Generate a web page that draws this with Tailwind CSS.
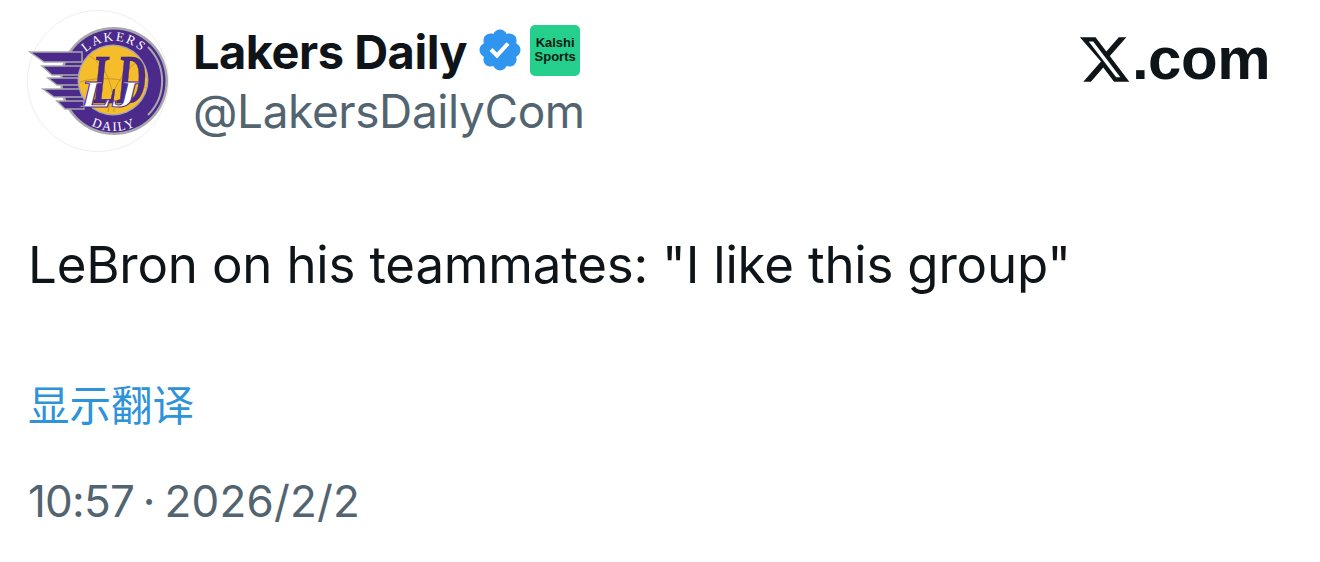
<!DOCTYPE html>
<html lang="en">
<head>
  <meta charset="UTF-8" />
  <title>Lakers Daily</title>
  <script src="https://cdn.jsdelivr.net/npm/@tailwindcss/browser@4"></script>
</head>
<body class="bg-white w-[1320px] h-[562px] overflow-hidden font-['Inter',sans-serif]">
  <main class="pl-[27px] pt-[10px]">
    <header class="flex items-start">
      <!-- avatar -->
      <svg class="w-[142px] h-[142px] shrink-0" viewBox="27 10 142 142">
        <circle cx="98" cy="81" r="70.5" fill="#fff" stroke="#eeeeee" />
        <circle cx="114" cy="81" r="54" fill="#a9a8ad" />
        <circle cx="114" cy="81" r="51.5" fill="#4b2a8c" />
        <path d="M148 47a48 48 0 0 1 0 68" fill="none" stroke="#a9a8ad" stroke-width="2" />
        <g fill="#4b2a8c" stroke="#a9a8ad" stroke-width="1.5">
          <polygon points="30,52 82,52 82,62 44,62" />
          <polygon points="42,66 82,66 82,75 52,75" />
          <polygon points="48,78 82,78 82,85 57,85" />
          <polygon points="43,89 82,89 82,97 54,97" />
          <polygon points="57,101 84,101 84,109 65,109" />
        </g>
        <circle cx="113" cy="80" r="35.5" fill="#a9a8ad" />
        <circle cx="113" cy="80" r="34" fill="#f6bd2b" />
        <g fill="none" stroke="#c9962a" stroke-width="1">
          <path d="M90 56c16 10 24 30 24 56" />
          <path d="M140 60c-14 8-28 26-32 52" />
          <path d="M80 82c20-6 46-4 66 6" />
        </g>
        <defs>
          <path id="topArc" d="M75 72a40 40 0 0 1 78 0" />
          <path id="botArc" d="M74 111a50 50 0 0 0 80 0" />
        </defs>
        <text font-family="Liberation Serif, serif" font-size="13" fill="#fff" letter-spacing="2"><textPath href="#topArc" startOffset="50%" text-anchor="middle">LAKERS</textPath></text>
        <text font-family="Liberation Serif, serif" font-size="13" fill="#fff" letter-spacing="1.5"><textPath href="#botArc" startOffset="50%" text-anchor="middle">DAILY</textPath></text>
        <text x="92" y="103" textLength="54" lengthAdjust="spacingAndGlyphs" font-family="Liberation Serif, serif" font-style="italic" font-weight="700" font-size="70" fill="#4b2a8c" stroke="#3a1f70" stroke-width="0.5">LD</text>
        <text x="80" y="107" textLength="58" lengthAdjust="spacingAndGlyphs" font-family="Liberation Serif, serif" font-style="italic" font-weight="700" font-size="38" fill="#fff" stroke="#4b2a8c" stroke-width="0.8">LJ</text>
      </svg>

      <div class="ml-[24px] pt-[13px]">
        <div class="flex items-center h-[56px]">
          <span class="text-[47px] leading-none font-bold tracking-[-0.5px] text-[#0f1419]">Lakers Daily</span>
          <svg class="w-[48px] h-[48px] ml-[9px] mb-[2px]" viewBox="0 0 24 24">
            <circle cx="12" cy="12" r="7" fill="#fff" />
            <path fill="#2f95ee" d="M22.25 12c0-1.43-.88-2.67-2.19-3.34.46-1.39.2-2.9-.81-3.91s-2.52-1.27-3.91-.81c-.66-1.31-1.91-2.19-3.34-2.19s-2.67.88-3.33 2.19c-1.4-.46-2.91-.2-3.92.81s-1.26 2.52-.8 3.91c-1.31.67-2.2 1.91-2.2 3.34s.89 2.67 2.2 3.34c-.46 1.39-.21 2.9.8 3.91s2.52 1.26 3.91.81c.67 1.31 1.91 2.19 3.34 2.19s2.68-.88 3.34-2.19c1.39.45 2.9.2 3.91-.81s1.27-2.52.81-3.91c1.31-.67 2.19-1.91 2.19-3.34zm-11.71 4.2L6.8 12.46l1.41-1.42 2.26 2.26 4.8-5.23 1.47 1.36-6.2 6.77z" />
          </svg>
          <div class="ml-[6px] mb-[2px] w-[50px] h-[51px] rounded-[5px] bg-[#25cf8c] flex flex-col items-center justify-center text-[13px] leading-[14px] font-semibold text-[#0b1a14] font-['Liberation_Sans',sans-serif]">
            <span>Kalshi</span>
            <span>Sports</span>
          </div>
        </div>
        <p class="text-[46px] leading-none mt-[9px] tracking-[-0.4px] text-[#536471]">@LakersDailyCom</p>
      </div>

      <div class="ml-auto mr-[50px] mt-[19px] flex items-center text-[#0f1419]">
        <svg class="w-[55px] h-[55px]" viewBox="0 0 24 24" fill="currentColor">
          <path d="M18.244 2.25h3.308l-7.227 8.26 8.502 11.24H16.17l-4.714-6.231-5.401 6.231H2.744l7.73-8.835L1.254 2.25H8.08l4.713 6.231zm-1.161 17.52h1.833L7.084 4.126H5.117z" />
        </svg>
        <span class="text-[60px] leading-none font-bold tracking-[-0.5px] font-['Liberation_Sans',sans-serif]">.com</span>
      </div>
    </header>

    <p class="mt-[86px] ml-[1px] text-[51px] leading-[54px] tracking-[-0.2px] text-[#0f1419]">LeBron on his teammates: "I like this group"</p>

    <a class="block mt-[87px] ml-[1px] text-[41.5px] leading-[48px] text-[#2e93d9] font-['Noto_Sans_CJK_SC',sans-serif]">显示翻译</a>

    <p class="mt-[47px] ml-[1px] text-[44px] leading-[54px] text-[#536471] [word-spacing:-3.5px]"><span class="tracking-[-0.8px]">10:57</span> · <span class="tracking-[0.2px]">2026/2/2</span></p>
  </main>
</body>
</html>
